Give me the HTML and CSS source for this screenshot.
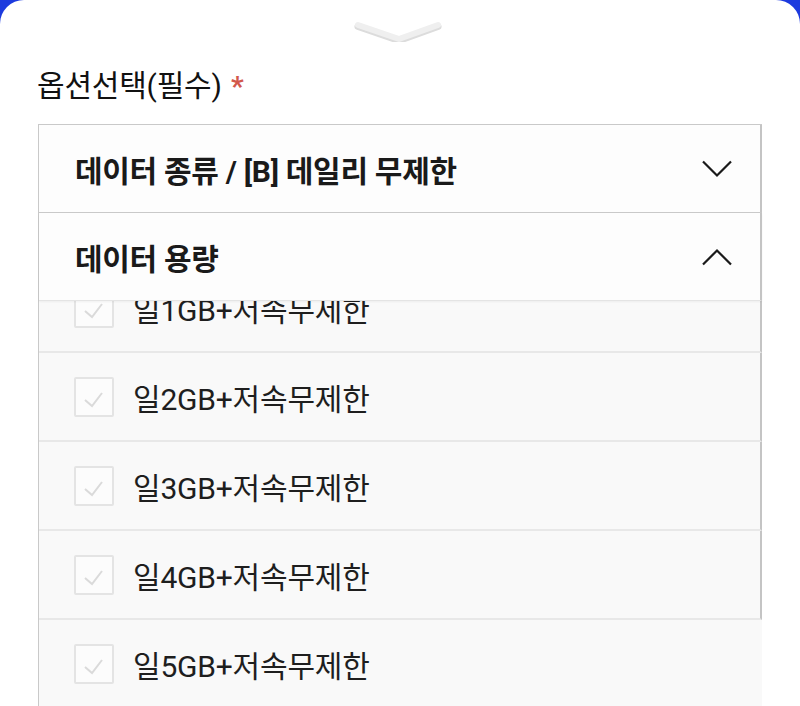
FILE: index.html
```html
<!DOCTYPE html>
<html lang="ko">
<head>
<meta charset="utf-8">
<link rel="stylesheet" href="styles.css">
</head>
<body>
<div class="sheet">
  <div class="handle">
    <svg width="100" height="40" viewBox="0 0 100 40">
      <polyline points="9,23 50,37 89,23" fill="none" stroke="#dcdcdc" stroke-width="7" stroke-linecap="round" stroke-linejoin="round" transform="translate(0,1.5)"/>
      <polyline points="9,23 50,37 89,23" fill="none" stroke="#efefef" stroke-width="6" stroke-linecap="round" stroke-linejoin="round"/>
    </svg>
  </div>
  <div class="title">옵션선택(필수) <span class="req">*</span></div>
  <div class="select">
    <div class="head">
      <span class="head-text">데이터 종류 / [B] 데일리 무제한</span>
      <svg class="chev" width="30" height="18" viewBox="0 0 30 18"><polyline points="1,1.5 15,15.5 29,1.5" fill="none" stroke="#1a1a1a" stroke-width="2.2"/></svg>
    </div>
    <div class="head head-open">
      <span class="head-text">데이터 용량</span>
      <svg class="chev" width="30" height="18" viewBox="0 0 30 18"><polyline points="1,16.5 15,2.5 29,16.5" fill="none" stroke="#1a1a1a" stroke-width="2.2"/></svg>
    </div>
    <div class="list">
      <div class="list-inner">
        <div class="item"><span class="box"><svg width="36" height="36" viewBox="0 0 36 36"><polyline points="9,21 16,27 26,14" fill="none" stroke="#dadada" stroke-width="2"/></svg></span><span class="label">일1GB+저속무제한</span></div>
        <div class="item"><span class="box"><svg width="36" height="36" viewBox="0 0 36 36"><polyline points="9,21 16,27 26,14" fill="none" stroke="#dadada" stroke-width="2"/></svg></span><span class="label">일2GB+저속무제한</span></div>
        <div class="item"><span class="box"><svg width="36" height="36" viewBox="0 0 36 36"><polyline points="9,21 16,27 26,14" fill="none" stroke="#dadada" stroke-width="2"/></svg></span><span class="label">일3GB+저속무제한</span></div>
        <div class="item"><span class="box"><svg width="36" height="36" viewBox="0 0 36 36"><polyline points="9,21 16,27 26,14" fill="none" stroke="#dadada" stroke-width="2"/></svg></span><span class="label">일4GB+저속무제한</span></div>
        <div class="item item-last"><span class="box"><svg width="36" height="36" viewBox="0 0 36 36"><polyline points="9,21 16,27 26,14" fill="none" stroke="#dadada" stroke-width="2"/></svg></span><span class="label">일5GB+저속무제한</span></div>
      </div>
    </div>
  </div>
</div>
</body>
</html>
```
FILE: styles.css
```css
html, body {
  margin: 0;
  padding: 0;
  background: #1c3ade;
  overflow: hidden;
}
body {
  width: 800px;
  height: 706px;
  font-family: Roboto, "Noto Sans CJK KR", sans-serif;
}
.sheet {
  background: #ffffff;
  border-radius: 24px 24px 0 0;
  height: 706px;
  overflow: hidden;
}
.handle {
  height: 66px;
  display: flex;
  justify-content: center;
  box-sizing: border-box;
}
.handle svg {
  margin-top: 2px;
  margin-left: -2px;
}
.title {
  margin-left: 37px;
  font-size: 30px;
  line-height: 40px;
  height: 40px;
  color: #111;
  letter-spacing: -0.2px;
}
.req {
  color: #d2584c;
  font-weight: 700;
  font-size: 28px;
  margin-left: 2px;
}
.select {
  margin: 18px 38px 0 38px;
  border-top: 1px solid #c9c9c9;
  border-left: 1px solid #c9c9c9;
  height: 600px;
  display: flex;
  flex-direction: column;
}
.head {
  height: 88px;
  box-sizing: border-box;
  background: #fdfdfd;
  border-right: 2px solid #c4c4c4;
  border-bottom: 1px solid #c9c9c9;
  display: flex;
  align-items: center;
  justify-content: space-between;
  padding: 0 28px 0 36px;
  flex-shrink: 0;
}
.head-open {
  border-bottom: 1px solid #e4e4e4;
  box-shadow: 0 1px 2px rgba(0,0,0,0.05);
  position: relative;
  z-index: 1;
}
.head-text {
  font-size: 30px;
  font-weight: 700;
  color: #1a1a1a;
  letter-spacing: -0.3px;
}
.chev {
  margin-top: 1px;
}
.list {
  flex: 1;
  overflow: hidden;
}
.list-inner {
  margin-top: -37px;
}
.item {
  height: 89px;
  box-sizing: border-box;
  background: #f9f9f9;
  border-right: 2px solid #c4c4c4;
  border-bottom: 2px solid #e8e8e8;
  display: flex;
  align-items: center;
  padding-left: 35px;
}
.item-last {
  border-right-color: transparent;
}
.box {
  width: 40px;
  height: 40px;
  box-sizing: border-box;
  border: 2px solid #e4e4e4;
  border-radius: 2px;
  background: #fcfcfc;
  display: flex;
  align-items: center;
  justify-content: center;
  margin-right: 19px;
  margin-top: 1px;
}
.label {
  font-size: 30px;
  color: #1e1e1e;
  letter-spacing: -0.2px;
}
```
